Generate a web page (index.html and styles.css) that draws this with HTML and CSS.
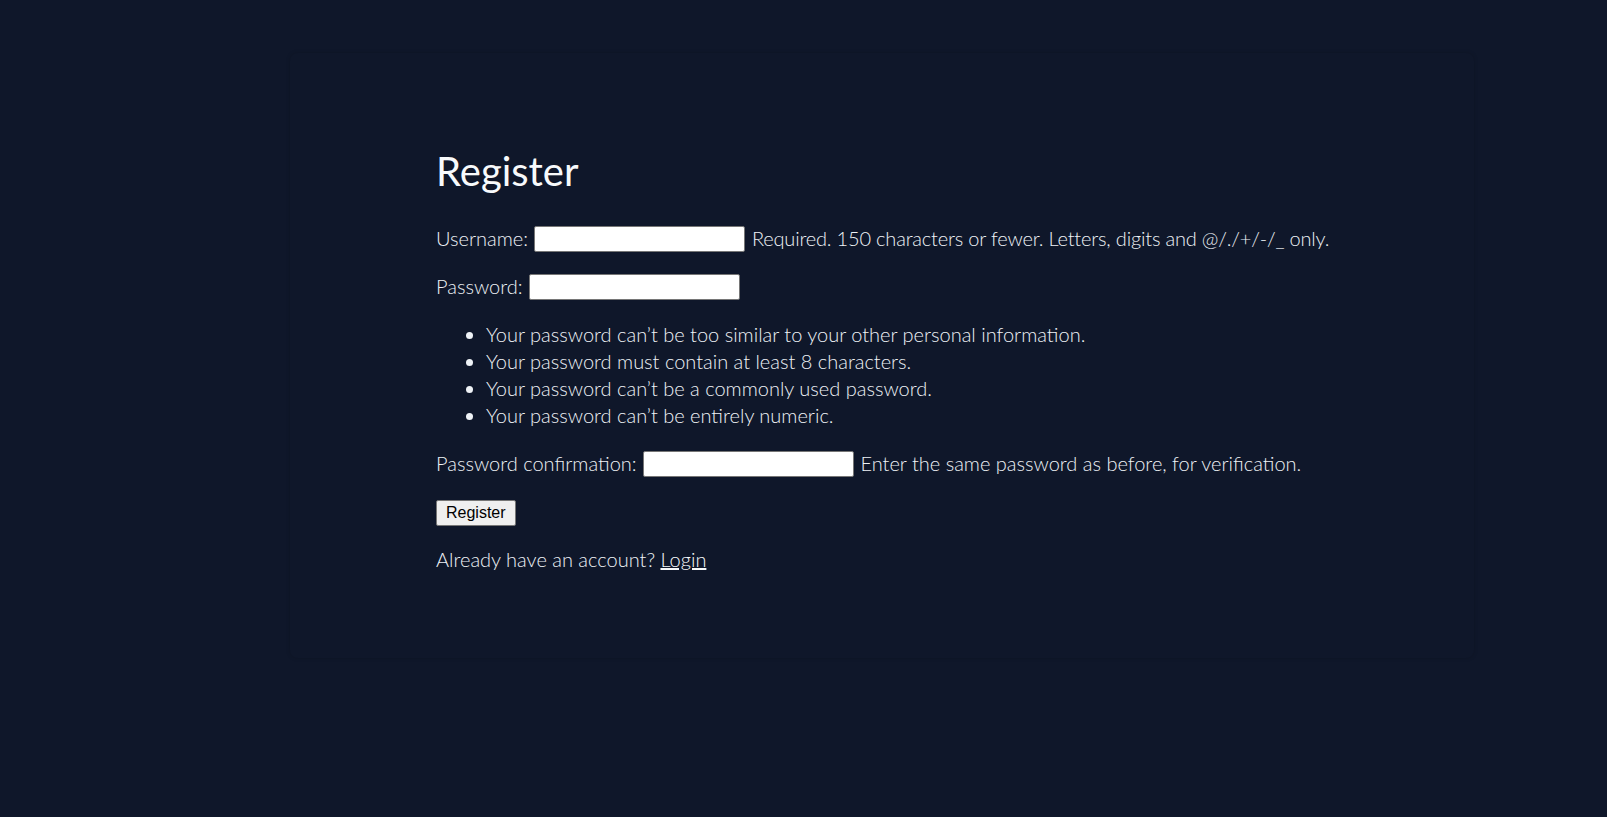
FILE: index.html
```html
<!DOCTYPE html>
<html lang="en">
<head>
<meta charset="utf-8">
<title>Register</title>
<link rel="stylesheet" href="styles.css">
</head>
<body>
<div class="page">
  <main class="card">
    <h1 class="title">Register</h1>
    <form class="form">
      <p class="row row-first"><label for="id_username">Username:</label> <input class="field" type="text" id="id_username"> <span class="helptext helptext-tight">Required. 150 characters or fewer. Letters, digits and @/./+/-/_ only.</span></p>
      <p class="row"><label for="id_password1">Password:</label> <input class="field" type="password" id="id_password1"></p>
      <ul class="rules">
        <li>Your password can’t be too similar to your other personal information.</li>
        <li>Your password must contain at least 8 characters.</li>
        <li>Your password can’t be a commonly used password.</li>
        <li>Your password can’t be entirely numeric.</li>
      </ul>
      <p class="row"><label for="id_password2">Password confirmation:</label> <input class="field" type="password" id="id_password2"> <span class="helptext">Enter the same password as before, for verification.</span></p>
      <div class="actions"><button class="btn" type="submit">Register</button></div>
    </form>
    <p class="row">Already have an account? <a class="link" href="#">Login</a></p>
  </main>
</div>
</body>
</html>
```

FILE: styles.css
```css
html, body {
  margin: 0;
  padding: 0;
  background: #0f172a;
}

body {
  font-family: "Lato", "Noto Sans", sans-serif;
  font-size: 20px;
  font-weight: 300;
  line-height: 1.364;
  letter-spacing: 0;
  color: #eef2f6;
}

.page {
  padding: 53px 133px 0 290px;
  height: 817px;
  box-sizing: border-box;
}

.card {
  height: 605px;
  box-sizing: border-box;
  padding: 91px 60px 0 146px;
  border-radius: 8px;
  box-shadow: 0 0 4px rgba(0, 0, 0, 0.18);
}

.title {
  margin: 0 0 26px;
  font-size: 40px;
  font-weight: 400;
  line-height: 1.364;
  color: #f8fafc;
}

.form {
  margin: 0;
}

.row {
  margin: 20px 0;
  white-space: nowrap;
}

.row-first {
  margin-bottom: 21.5px;
}

.helptext-tight {
  letter-spacing: -0.18px;
}

.field {
  box-sizing: border-box;
  width: 211px;
  height: 26px;
  margin: 0 1px;
  padding: 1px 2px;
  border: 1px solid #767676;
  border-radius: 2px;
  background: #ffffff;
  vertical-align: text-top;
  font: 13.33px "Liberation Sans", Arial, sans-serif;
}

.rules {
  margin: 20px 0;
  padding-left: 50px;
}

.actions {
  margin: 0;
}

.btn {
  box-sizing: border-box;
  height: 26px;
  padding: 0 9px;
  border: 1px solid #767676;
  border-radius: 2px;
  background: #efefef;
  color: #000000;
  font: 16px "Liberation Sans", Arial, sans-serif;
  line-height: 18px;
}

.link {
  color: #f8fafc;
  text-decoration: underline;
}
```
